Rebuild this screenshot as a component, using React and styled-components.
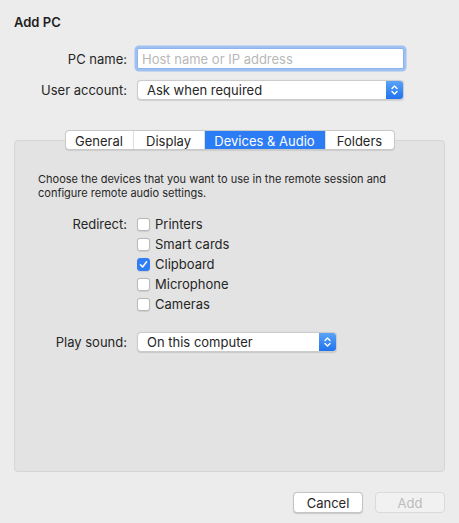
import React, { useState } from "react";
import styled, { createGlobalStyle } from "styled-components";

const GlobalStyle = createGlobalStyle`
  html, body {
    margin: 0;
    padding: 0;
    background: #ececec;
  }
  body {
    font-family: Inter, "Liberation Sans", Arial, sans-serif;
    font-size: 13px;
    color: #262626;
  }
`;

const Window = styled.div`
  width: 459px;
  height: 523px;
  box-sizing: border-box;
  padding: 15px 14px 0 14px;
  background: #ececec;
  display: flex;
  flex-direction: column;
`;

const Title = styled.h1`
  margin: 0;
  font-size: 13px;
  font-weight: 600;
  color: #1f1f1f;
  line-height: 15px;
`;

const Form = styled.div`
  margin-top: 18px;
  display: grid;
  grid-template-columns: 113px 1fr;
  column-gap: 9px;
  row-gap: 11px;
  align-items: center;
  padding-right: 41px;
`;

const Label = styled.label`
  text-align: right;
  white-space: nowrap;
  color: #262626;
`;

const TextInput = styled.input`
  height: 21px;
  box-sizing: border-box;
  margin-left: 1px;
  border: 1px solid #8db3ec;
  border-radius: 2px;
  box-shadow: 0 0 0 2.5px #9fc0f2;
  padding: 0 4px;
  font-family: inherit;
  font-size: 13px;
  background: #fff;
  outline: none;
  &::placeholder {
    color: #b8b8b8;
  }
`;

const Popup = styled.div`
  height: 20px;
  width: ${({ width }) => (width ? `${width}px` : "auto")};
  box-sizing: border-box;
  display: flex;
  align-items: center;
  background: #fff;
  border: 1px solid #cbcbcb;
  border-radius: 4px;
  box-shadow: 0 0.5px 1px rgba(0, 0, 0, 0.12);
  overflow: hidden;
  margin-left: ${({ offset }) => offset || 0}px;
`;

const PopupText = styled.span`
  flex: 1;
  padding-left: 9px;
  color: #262626;
`;

const Stepper = styled.span`
  width: 17px;
  height: 100%;
  display: flex;
  align-items: center;
  justify-content: center;
  background: linear-gradient(#5aa3f8, #2172ed);
`;

const TabArea = styled.div`
  margin-top: 30px;
  display: flex;
  flex-direction: column;
`;

const TabBar = styled.div`
  align-self: center;
  display: flex;
  height: 20px;
  box-sizing: border-box;
  background: #fff;
  border: 1px solid #c9c9c9;
  border-radius: 4px;
  box-shadow: 0 0.5px 1px rgba(0, 0, 0, 0.1);
  overflow: hidden;
  position: relative;
  z-index: 1;
`;

const Tab = styled.div`
  width: ${({ width }) => width}px;
  display: flex;
  align-items: center;
  justify-content: center;
  color: ${({ active }) => (active ? "#fff" : "#262626")};
  background: ${({ active }) => (active ? "#2c7cf6" : "transparent")};
  border-left: ${({ first }) => (first ? "none" : "1px solid #dedede")};
  line-height: 18px;
  padding-top: 1px;
`;

const Panel = styled.div`
  margin-top: -10px;
  height: 332px;
  box-sizing: border-box;
  background: #e3e3e3;
  border: 1px solid #d6d6d6;
  border-radius: 4px;
  padding: 31px 20px 0 23px;
`;

const Description = styled.p`
  margin: 0;
  font-size: 11px;
  line-height: 14px;
  color: #262626;
`;

const Options = styled.div`
  margin-top: 14px;
  display: grid;
  grid-template-columns: 89px 1fr;
  column-gap: 10px;
  align-items: start;
`;

const OptionLabel = styled.div`
  text-align: right;
  line-height: 20px;
  white-space: nowrap;
`;

const CheckList = styled.div`
  display: flex;
  flex-direction: column;
`;

const CheckRow = styled.label`
  display: flex;
  align-items: center;
  gap: 5px;
  height: 20px;
`;

const Box = styled.span`
  width: 13px;
  height: 13px;
  box-sizing: border-box;
  border-radius: 3px;
  display: flex;
  align-items: center;
  justify-content: center;
  background: ${({ checked }) => (checked ? "#2f7ef6" : "#fff")};
  border: 1px solid ${({ checked }) => (checked ? "#2f7ef6" : "#b9b9b9")};
  box-shadow: 0 0.5px 1px rgba(0, 0, 0, 0.1);
`;

const SoundRow = styled(Options)`
  margin-top: 18px;
  align-items: center;
`;

const Footer = styled.div`
  display: flex;
  justify-content: flex-end;
  gap: 12px;
  margin-top: 20px;
`;

const Button = styled.button`
  width: 70px;
  height: 21px;
  box-sizing: border-box;
  border-radius: 4px;
  font-family: inherit;
  font-size: 13px;
  padding: 0;
  background: ${({ disabled }) => (disabled ? "#f1f1f1" : "#fff")};
  color: ${({ disabled }) => (disabled ? "#bcbcbc" : "#262626")};
  border: 1px solid ${({ disabled }) => (disabled ? "#dadada" : "#c5c5c5")};
  box-shadow: ${({ disabled }) => (disabled ? "none" : "0 0.5px 1px rgba(0,0,0,0.15)")};
`;

const Chevrons = () => (
  <svg width="9" height="12" viewBox="0 0 9 12">
    <path d="M2 4.5 L4.5 2 L7 4.5 M2 7.5 L4.5 10 L7 7.5" fill="none" stroke="#fff" strokeWidth="1.4" strokeLinecap="round" strokeLinejoin="round" />
  </svg>
);

const Check = () => (
  <svg width="9" height="9" viewBox="0 0 9 9">
    <path d="M1.5 4.8 L3.6 7 L7.6 1.8" fill="none" stroke="#fff" strokeWidth="1.5" strokeLinecap="round" strokeLinejoin="round" />
  </svg>
);

const tabs = [
  { name: "General", width: 67 },
  { name: "Display", width: 70 },
  { name: "Devices & Audio", width: 120 },
  { name: "Folders", width: 68 },
];

const devices = ["Printers", "Smart cards", "Clipboard", "Microphone", "Cameras"];

const App = () => {
  const [checked, setChecked] = useState({ Clipboard: true });

  return (
    <>
      <GlobalStyle />
      <Window>
        <Title>Add PC</Title>
        <Form>
          <Label>PC name:</Label>
          <TextInput placeholder="Host name or IP address" />
          <Label>User account:</Label>
          <Popup offset={1}>
            <PopupText>Ask when required</PopupText>
            <Stepper>
              <Chevrons />
            </Stepper>
          </Popup>
        </Form>

        <TabArea>
          <TabBar>
            {tabs.map((t, i) => (
              <Tab key={t.name} width={t.width} first={i === 0} active={t.name === "Devices & Audio"}>
                {t.name}
              </Tab>
            ))}
          </TabBar>
          <Panel>
            <Description>
              Choose the devices that you want to use in the remote session and
              <br />
              configure remote audio settings.
            </Description>
            <Options>
              <OptionLabel>Redirect:</OptionLabel>
              <CheckList>
                {devices.map((d) => (
                  <CheckRow key={d} onClick={() => setChecked((p) => ({ ...p, [d]: !p[d] }))}>
                    <Box checked={!!checked[d]}>{checked[d] && <Check />}</Box>
                    {d}
                  </CheckRow>
                ))}
              </CheckList>
            </Options>
            <SoundRow>
              <OptionLabel>Play sound:</OptionLabel>
              <Popup width={200}>
                <PopupText>On this computer</PopupText>
                <Stepper>
                  <Chevrons />
                </Stepper>
              </Popup>
            </SoundRow>
          </Panel>
        </TabArea>

        <Footer>
          <Button>Cancel</Button>
          <Button disabled>Add</Button>
        </Footer>
      </Window>
    </>
  );
};

export default App;
